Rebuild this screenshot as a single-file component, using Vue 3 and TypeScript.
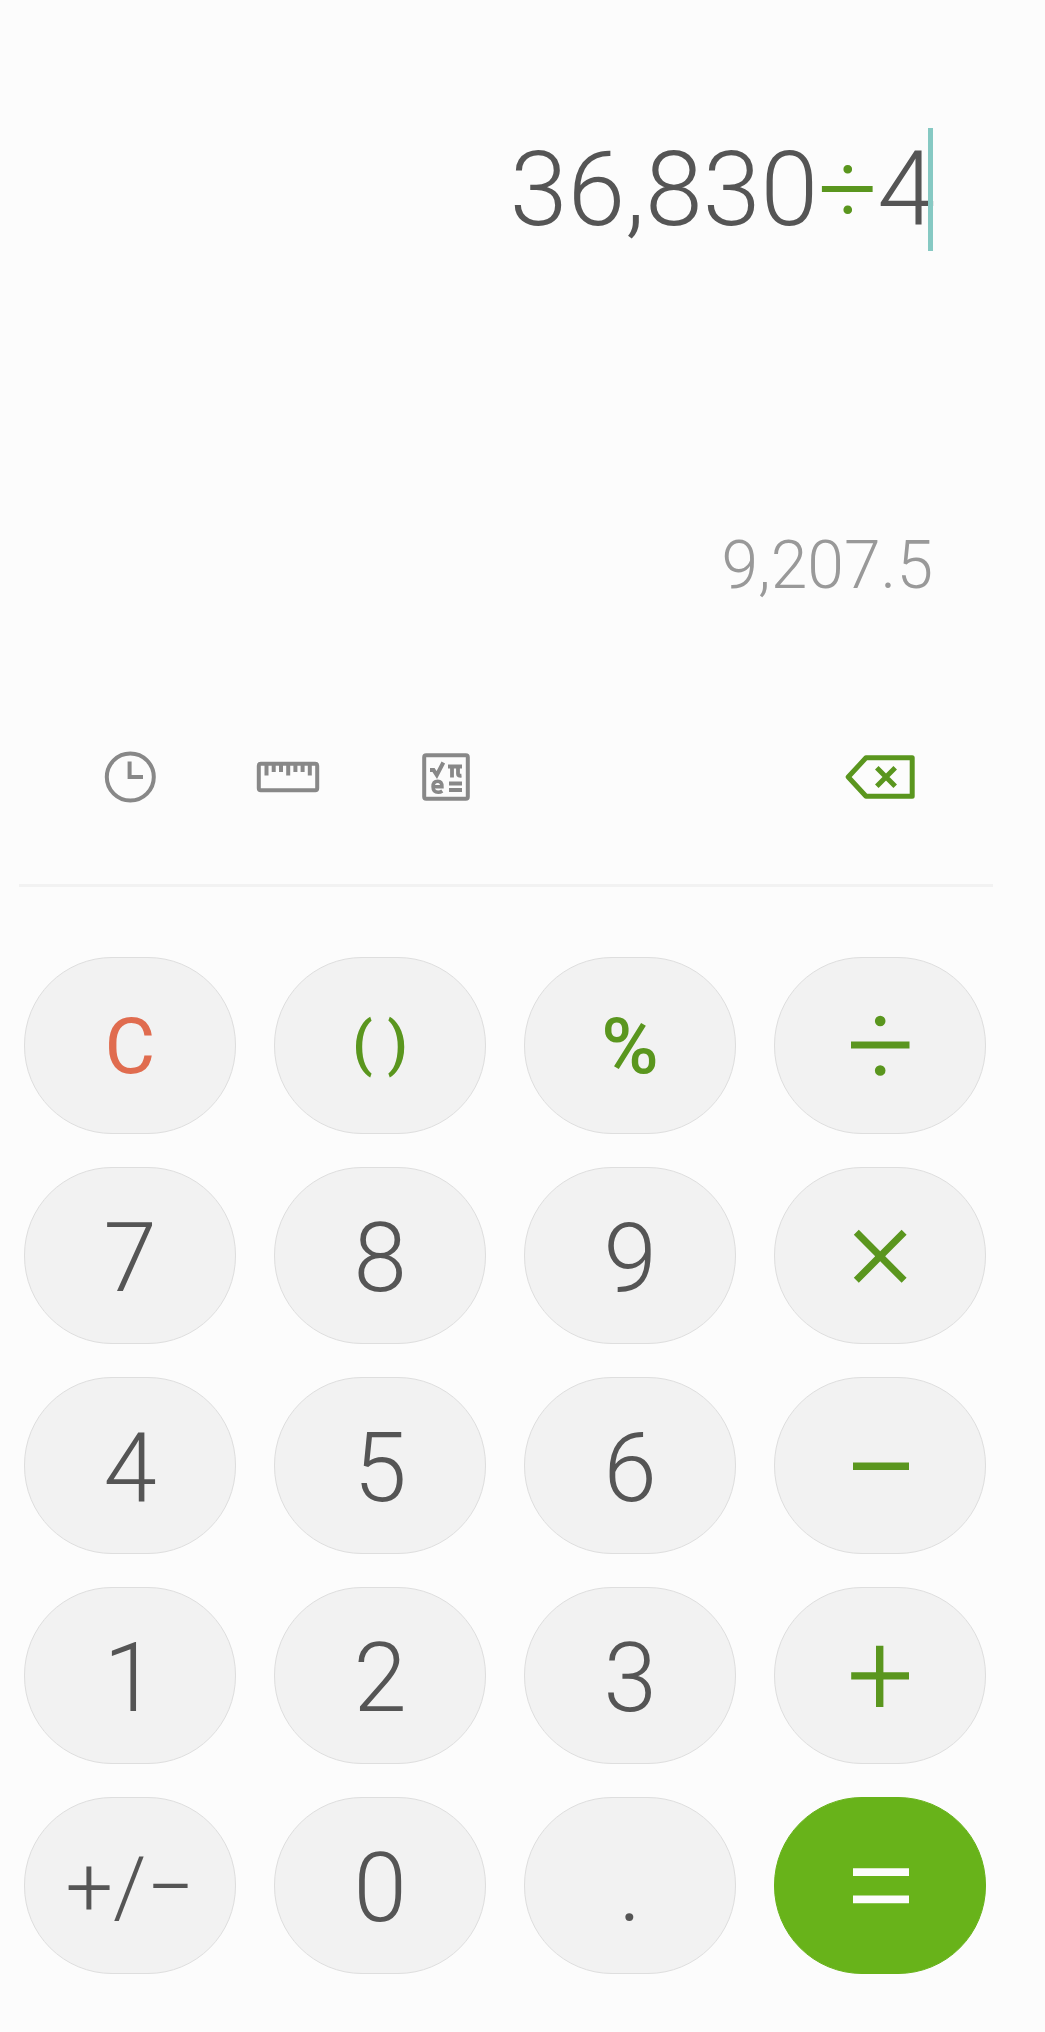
<script setup lang="ts">
type Kind = 'digit' | 'clear' | 'paren' | 'percent' | 'operator' | 'sign' | 'equals'

interface Key {
  label: string
  name: string
  kind: Kind
  icon?: string
}

interface Token {
  text: string
  operator?: boolean
}

const digit = (label: string): Key => ({ label, name: label, kind: 'digit' })
const operator = (name: string, icon: string): Key => ({ label: '', name, kind: 'operator', icon })

const expression: Token[] = [
  { text: '36,830' },
  { text: '÷', operator: true },
  { text: '4' },
]
const result = '9,207.5'

const keys: Key[] = [
  { label: 'C', name: 'Clear', kind: 'clear' },
  { label: '( )', name: 'Parentheses', kind: 'paren' },
  { label: '%', name: 'Percent', kind: 'percent' },
  operator(
    'Divide',
    'M7 31.5h58.5v7H7zM30.9 11a5.3 5.3 0 1 0 10.6 0a5.3 5.3 0 1 0-10.6 0zM30.9 60.5a5.3 5.3 0 1 0 10.6 0a5.3 5.3 0 1 0-10.6 0z',
  ),
  digit('7'),
  digit('8'),
  digit('9'),
  operator(
    'Multiply',
    'M14.8 9.8L36.2 31.3L57.6 9.8L62.6 14.8L41.2 36.3L62.6 57.8L57.6 62.8L36.2 41.3L14.8 62.8L9.8 57.8L31.2 36.3L9.8 14.8z',
  ),
  digit('4'),
  digit('5'),
  digit('6'),
  operator('Minus', 'M9 32.5h56v7.5H9z'),
  digit('1'),
  digit('2'),
  digit('3'),
  operator('Plus', 'M7.2 32.2H32V5.8h7.4V32.2H65v7.2H39.4V67H32V39.4H7.2z'),
  { label: '+/−', name: 'Change sign', kind: 'sign' },
  digit('0'),
  digit('.'),
  { label: '', name: 'Equals', kind: 'equals', icon: 'M9 18.2h56v7.8H9zM9 45.5h56v7.8H9z' },
]
</script>

<template>
  <main class="calculator">
    <section class="display">
      <div class="expression">
        <span
          v-for="(token, i) in expression"
          :key="i"
          :class="{ 'expression-operator': token.operator }"
        >{{ token.text }}</span>
        <span class="caret"></span>
      </div>
      <output class="result">{{ result }}</output>
    </section>

    <nav class="toolbar">
      <button type="button" class="tool" aria-label="History">
        <svg width="64" height="64" viewBox="0 0 64 64" fill="none" stroke="currentColor" stroke-width="4">
          <circle cx="32.3" cy="32" r="23.5" />
          <path d="M31.6 16.5V32H45" />
        </svg>
      </button>
      <button type="button" class="tool" aria-label="Unit converter">
        <svg width="64" height="64" viewBox="0 0 64 64" fill="none" stroke="currentColor" stroke-width="4">
          <rect x="2.8" y="18.8" width="58.4" height="26.4" rx="2" />
          <path d="M10.5 18v12.5M17.7 18v9M25 18v9M32.2 18v12.5M39.4 18v9M46.6 18v9M53.8 18v12.5" />
        </svg>
      </button>
      <button type="button" class="tool" aria-label="Scientific mode">
        <svg width="64" height="64" viewBox="0 0 64 64" fill="none" stroke="currentColor" stroke-width="4">
          <rect x="10.2" y="10.2" width="43.6" height="43.6" rx="2" />
          <path d="M16 25H19.5L22.8 30L29.3 17.5" stroke-width="4" />
          <path d="M34 21.5H48M38 21V32.5M44 21V29Q44 31.1 47.5 30.7" stroke-width="3.8" />
          <path d="M18.8 41.8H28Q28 36.3 23.7 36.3Q19 36.3 19 41.8T24.2 47.3Q26.5 47.3 28.3 46" stroke-width="3.4" />
          <path d="M35 38.6H48M35 45H48" stroke-width="4" />
        </svg>
      </button>
      <button type="button" class="tool tool-delete" aria-label="Delete">
        <svg width="72" height="64" viewBox="0 0 72 64" fill="none" stroke="currentColor" stroke-width="5" stroke-linejoin="round">
          <path d="M4.2 32L22 12.8H68.2V51.2H22Z" />
          <path d="M32.8 22.8L51.2 41.2M51.2 22.8L32.8 41.2" />
        </svg>
      </button>
    </nav>

    <hr class="divider" />

    <section class="keypad">
      <button
        v-for="key in keys"
        :key="key.name"
        type="button"
        class="key"
        :class="`key-${key.kind}`"
        :aria-label="key.name"
      >
        <svg v-if="key.icon" width="72" height="72" viewBox="0 0 72 72" fill="currentColor">
          <path :d="key.icon" />
        </svg>
        <template v-else>{{ key.label }}</template>
      </button>
    </section>
  </main>
</template>

<style>
body {
  margin: 0;
  background: #fcfcfc;
}
</style>

<style scoped>
.calculator {
  min-height: 100vh;
  box-sizing: border-box;
  background: #fcfcfc;
  color: #555;
  font-family: Roboto, sans-serif;
  font-weight: 300;
}

.display {
  display: flex;
  flex-direction: column;
  align-items: flex-end;
  gap: 276px;
  padding: 128px 112px 0 24px;
}

.expression {
  display: flex;
  font-size: 104px;
  line-height: 123px;
}

.expression-operator {
  color: #5a961e;
}

.caret {
  width: 5px;
  margin-left: -7px;
  background: #86c9c3;
}

.result {
  color: #999;
  font-size: 66px;
  line-height: 77px;
}

.toolbar {
  display: flex;
  padding: 119px 86px 54px 51px;
}

button {
  margin: 0;
  padding: 0;
  border: 0;
  background: none;
  color: inherit;
  font: inherit;
  cursor: pointer;
}

.tool {
  display: flex;
  align-items: center;
  justify-content: center;
  width: 158px;
  height: 107px;
  color: #888;
}

.tool-delete {
  margin-left: auto;
  color: #5a961e;
}

.divider {
  height: 3px;
  margin: 0 52px 0 19px;
  border: 0;
  background: #f2f2f2;
}

.keypad {
  display: grid;
  grid-template-columns: repeat(4, 1fr);
  grid-auto-rows: 177px;
  gap: 33px 38px;
  padding: 70px 59px 58px 24px;
}

.key {
  display: flex;
  align-items: center;
  justify-content: center;
  padding-top: 4px;
  border: 1px solid #dedede;
  border-radius: 88px;
  background: #f2f2f2;
  font-size: 96px;
  line-height: 112px;
}

.key-clear,
.key-percent {
  padding-top: 2px;
  font-size: 78px;
}

.key-clear {
  color: #e06c4f;
  font-weight: 400;
}

.key-percent {
  color: #5a961e;
  font-weight: 500;
}

.key-paren {
  padding: 0 0 4px;
  color: #5a961e;
  font-size: 59px;
  font-weight: 500;
}

.key-operator,
.key-equals {
  padding: 0;
}

.key-operator {
  color: #5a961e;
}

.key-sign {
  font-size: 84px;
}

.key-equals {
  border-color: #68b31a;
  background: #68b31a;
  color: #fcfcfc;
}
</style>
